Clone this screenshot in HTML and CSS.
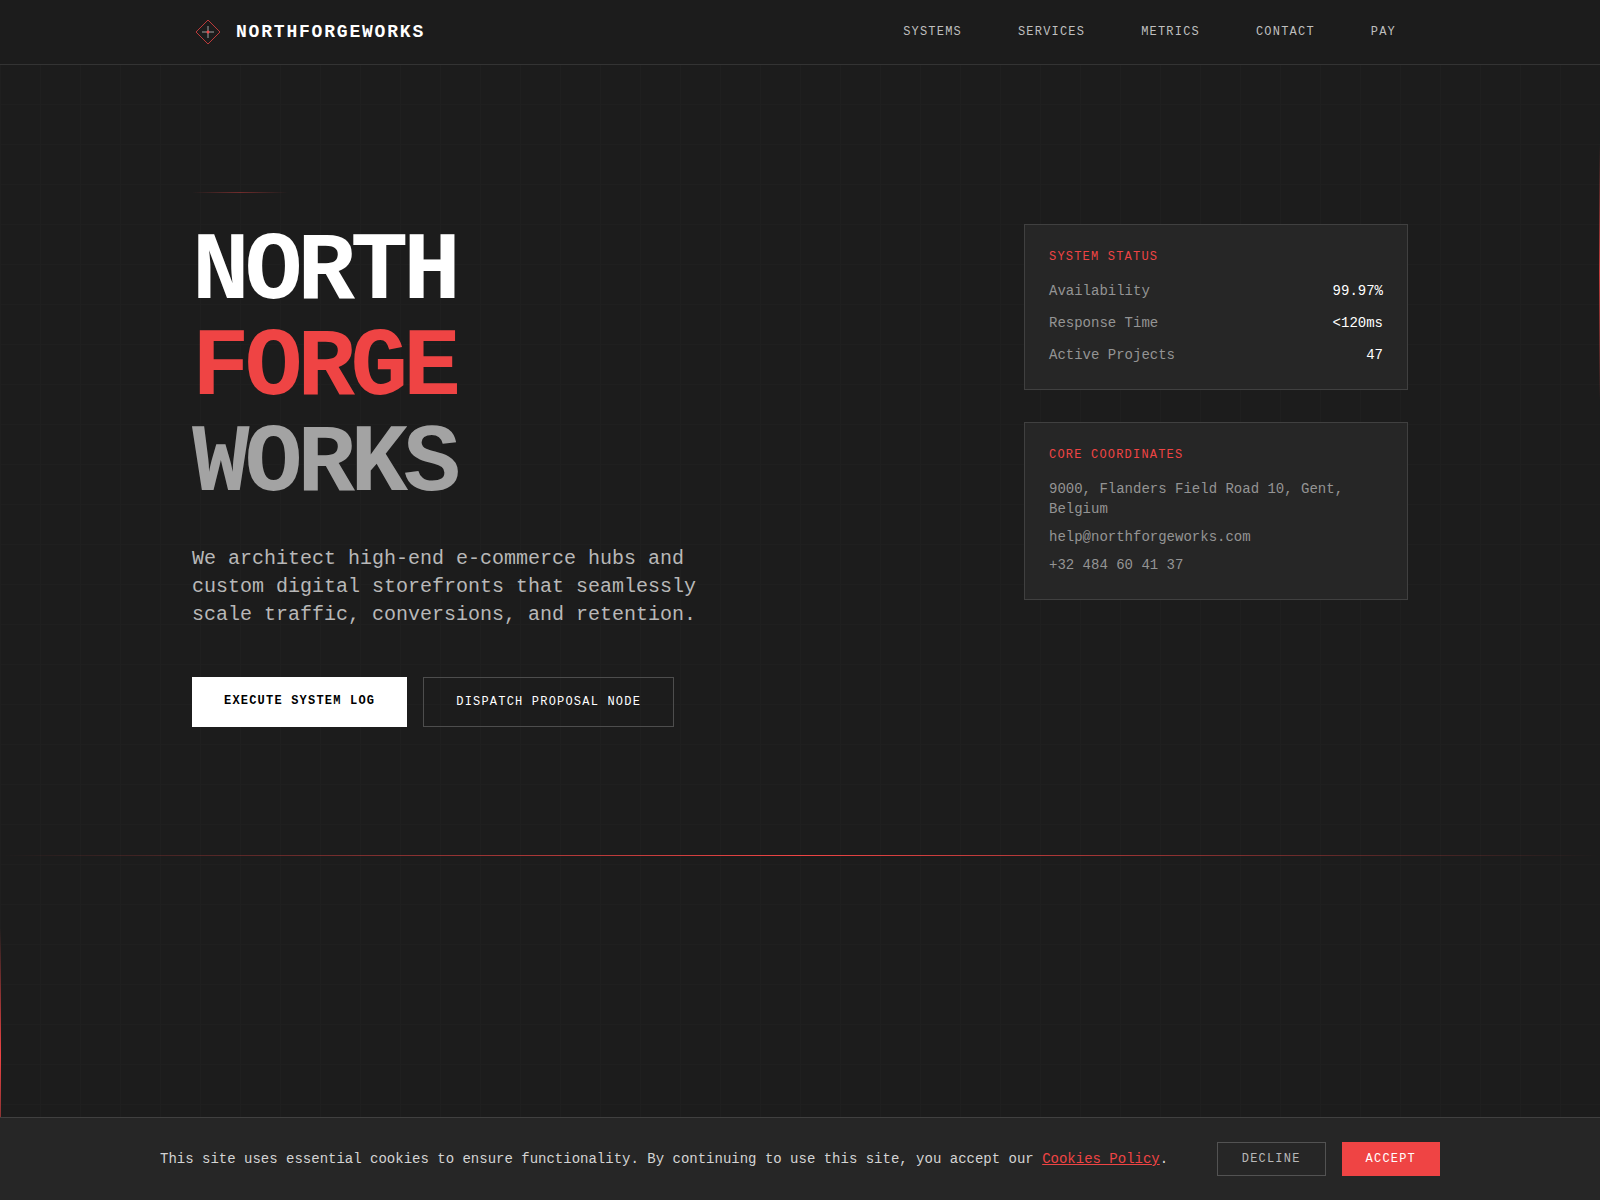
FILE: index.html
```html
<!DOCTYPE html>
<html lang="en">
<head>
<meta charset="utf-8">
<meta name="viewport" content="width=device-width, initial-scale=1">
<title>NorthForgeWorks</title>
<link rel="stylesheet" href="styles.css">
</head>
<body>
<header class="site-header">
  <div class="container header-row">
    <a class="brand" href="#">
      <svg class="brand-mark" viewBox="0 0 32 32" fill="none" aria-hidden="true">
        <path d="M16 4L28 16L16 28L4 16Z" stroke="#ef4444" stroke-width="1" opacity="0.75"/>
        <path d="M16 10V22M10 16H22" stroke="#5e5e5e" stroke-width="2"/>
        <circle cx="16" cy="16" r="1.5" fill="#ef4444"/>
      </svg>
      <span class="brand-name">NORTHFORGEWORKS</span>
    </a>
    <nav class="site-nav" aria-label="Main">
      <a href="#systems">SYSTEMS</a>
      <a href="#services">SERVICES</a>
      <a href="#metrics">METRICS</a>
      <a href="#contact">CONTACT</a>
      <a href="#pay">PAY</a>
    </nav>
  </div>
</header>
<main class="page">
  <section class="hero">
    <div class="container hero-grid">
      <div class="intro">
        <div class="accent-line"></div>
        <h1 class="title">
          <span>NORTH</span>
          <span class="title-red">FORGE</span>
          <span class="title-gray">WORKS</span>
        </h1>
        <p class="lead">We architect high-end e-commerce hubs and custom digital storefronts that seamlessly scale traffic, conversions, and retention.</p>
        <div class="actions">
          <a class="action action-solid" href="#systems">EXECUTE SYSTEM LOG</a>
          <a class="action action-outline" href="#contact">DISPATCH PROPOSAL NODE</a>
        </div>
      </div>
      <aside class="cards">
        <section class="card">
          <h2 class="card-title">SYSTEM STATUS</h2>
          <dl class="stats">
            <div class="stat"><dt>Availability</dt><dd>99.97%</dd></div>
            <div class="stat"><dt>Response Time</dt><dd>&lt;120ms</dd></div>
            <div class="stat"><dt>Active Projects</dt><dd>47</dd></div>
          </dl>
        </section>
        <section class="card">
          <h2 class="card-title">CORE COORDINATES</h2>
          <address class="contact">
            <p>9000, Flanders Field Road 10, Gent, Belgium</p>
            <p>help@northforgeworks.com</p>
            <p>+32 484 60 41 37</p>
          </address>
        </section>
      </aside>
    </div>
  </section>
  <div class="divider"></div>
  <section class="next-section" id="systems"></section>
</main>
<aside class="cookie-bar" aria-label="Cookies">
  <div class="cookie-row">
    <p class="cookie-text">This site uses essential cookies to ensure functionality. By continuing to use this site, you accept our <a href="#cookies">Cookies Policy</a>.</p>
    <div class="cookie-actions">
      <button class="cookie-button decline" type="button">DECLINE</button>
      <button class="cookie-button accept" type="button">ACCEPT</button>
    </div>
  </div>
</aside>
</body>
</html>
```
FILE: styles.css
```css
* {
  box-sizing: border-box;
}

body {
  margin: 0;
  min-height: 100vh;
  display: flex;
  flex-direction: column;
  background-color: #1c1c1c;
  background-image:
    linear-gradient(to right, #1f1f1f 1px, transparent 1px),
    linear-gradient(to bottom, #1f1f1f 1px, transparent 1px);
  background-size: 40px 40px;
  background-position: 0 64px;
  color: #fff;
  font-family: "Liberation Mono", "Courier New", monospace;
  font-size: 14px;
  line-height: 20px;
}

a {
  color: inherit;
  text-decoration: none;
}

h1, h2, p, dl, dd {
  margin: 0;
}

.container {
  width: 100%;
  max-width: 1280px;
  margin: 0 auto;
  padding: 0 32px;
}

/* Header */
.site-header {
  position: fixed;
  top: 0;
  left: 0;
  right: 0;
  z-index: 10;
  background: #1c1c1c;
  border-bottom: 1px solid #333;
}

.header-row {
  min-height: 64px;
  display: flex;
  align-items: center;
  justify-content: space-between;
}

.brand {
  display: flex;
  align-items: center;
  gap: 12px;
}

.brand-mark {
  width: 32px;
  height: 32px;
}

.brand-name {
  font-size: 18px;
  font-weight: 700;
  line-height: 28px;
  letter-spacing: 0.1em;
}

.site-nav {
  display: flex;
  gap: 32px;
}

.site-nav a {
  padding: 8px 12px;
  color: #bfbfbf;
  font-size: 12px;
  line-height: 16px;
  letter-spacing: 0.1em;
}

/* Hero */
.page {
  flex: 1;
  display: flex;
  flex-direction: column;
  padding-top: 64px;
}

.hero {
  position: relative;
  padding: 128px 0;
}

.hero::after {
  content: "";
  position: absolute;
  top: 80px;
  right: 0;
  width: 1px;
  height: 256px;
  background: linear-gradient(to bottom, transparent, #ef4444, transparent);
  opacity: 0.8;
}

.hero-grid {
  display: grid;
  grid-template-columns: repeat(3, 1fr);
  gap: 32px;
}

.intro {
  grid-column: span 2;
}

.accent-line {
  width: 96px;
  height: 1px;
  margin-bottom: 32px;
  background: linear-gradient(to right, transparent, #ef4444, transparent);
  opacity: 0.4;
}

.title {
  margin-bottom: 32px;
  font-size: 96px;
  font-weight: 700;
  line-height: 96px;
  letter-spacing: -0.05em;
}

.title span {
  display: block;
}

.title .title-red {
  color: #ef4444;
}

.title .title-gray {
  color: #a3a3a3;
}

.lead {
  max-width: 512px;
  margin-bottom: 48px;
  color: #b8b8b8;
  font-size: 20px;
  line-height: 28px;
}

.actions {
  display: flex;
  gap: 16px;
}

.action {
  padding: 16px 32px;
  font-size: 12px;
  line-height: 16px;
  letter-spacing: 0.1em;
}

.action-solid {
  background: #fff;
  color: #000;
  font-weight: 700;
}

.action-outline {
  border: 1px solid #4d4d4d;
}

.cards {
  display: flex;
  flex-direction: column;
  gap: 32px;
  padding-top: 32px;
}

.card {
  padding: 24px;
  background: #262626;
  border: 1px solid #404040;
}

.card-title {
  margin-bottom: 16px;
  color: #ef4444;
  font-size: 12px;
  font-weight: 400;
  line-height: 16px;
  letter-spacing: 0.1em;
}

.stats {
  display: flex;
  flex-direction: column;
  gap: 12px;
}

.stat {
  display: flex;
  justify-content: space-between;
  color: #949494;
}

.stat dd {
  color: #fff;
}

.contact {
  display: flex;
  flex-direction: column;
  gap: 8px;
  color: #949494;
  font-style: normal;
}

.divider {
  height: 1px;
  background: linear-gradient(to right, transparent, #ef4444, transparent);
}

.next-section {
  position: relative;
  flex: 1;
  min-height: 344px;
}

.next-section::before {
  content: "";
  position: absolute;
  top: 72px;
  left: 0;
  width: 1px;
  height: 256px;
  background: linear-gradient(to bottom, transparent, #ef4444, transparent);
}

/* Cookie notice */
.cookie-bar {
  position: fixed;
  left: 0;
  right: 0;
  bottom: 0;
  z-index: 20;
  padding: 24px;
  background: #262626;
  border-top: 1px solid #404040;
}

.cookie-row {
  max-width: 1280px;
  margin: 0 auto;
  display: flex;
  align-items: center;
  justify-content: space-between;
  gap: 16px;
}

.cookie-text {
  color: #d4d4d4;
}

.cookie-text a {
  color: #ef4444;
  text-decoration: underline;
}

.cookie-actions {
  display: flex;
  gap: 16px;
}

.cookie-button {
  padding: 8px 24px;
  border: 0;
  font-family: inherit;
  font-size: 12px;
  line-height: 16px;
  letter-spacing: 0.1em;
}

.decline {
  background: transparent;
  border: 1px solid #525252;
  color: #b8b8b8;
}

.accept {
  background: #ef4444;
  color: #fff;
}
```
